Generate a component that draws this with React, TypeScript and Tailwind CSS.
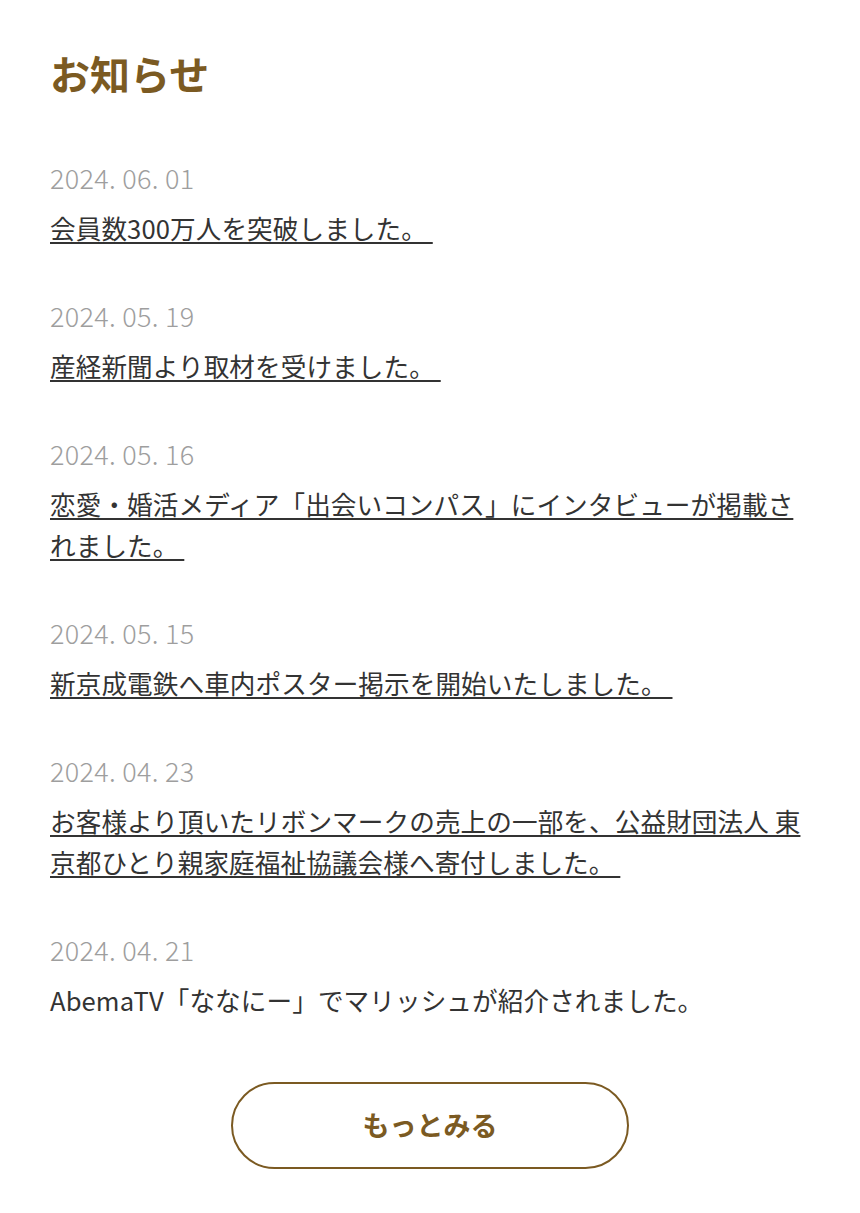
const news = [
  { date: '2024. 06. 01', title: '会員数300万人を突破しました。 ', link: true },
  { date: '2024. 05. 19', title: '産経新聞より取材を受けました。 ', link: true },
  { date: '2024. 05. 16', title: '恋愛・婚活メディア「出会いコンパス」にインタビューが掲載されました。 ', link: true },
  { date: '2024. 05. 15', title: '新京成電鉄へ車内ポスター掲示を開始いたしました。 ', link: true },
  { date: '2024. 04. 23', title: 'お客様より頂いたリボンマークの売上の一部を、公益財団法人 東京都ひとり親家庭福祉協議会様へ寄付しました。 ', link: true },
  { date: '2024. 04. 21', title: 'AbemaTV「ななにー」でマリッシュが紹介されました。', link: false },
];

export default function App() {
  return (
    <div className="min-h-[1213px] bg-white px-[50px] pt-[44px] pb-[44px] font-['Noto_Sans_CJK_JP',sans-serif]">
      <h2 className="text-[40px] font-bold leading-[58px] text-[#7b5a22]">お知らせ</h2>

      <ul className="mt-[58px] flex flex-col gap-[50px]">
        {news.map((n) => (
          <li key={n.date}>
            <p className="text-[27px] font-light leading-[36px] tracking-[0.3px] text-[#9e9e9e]">{n.date}</p>
            <p className="mt-[11px] text-[25.6px] leading-[41px] tracking-[0.1px] text-[#333333]">
              {n.link ? (
                <a href="#" className="underline decoration-[2px] underline-offset-[3px] whitespace-pre-wrap">
                  {n.title}
                </a>
              ) : (
                n.title
              )}
            </p>
          </li>
        ))}
      </ul>

      <div className="mt-[62px] flex justify-center">
        <button className="flex h-[87px] w-[398px] items-center justify-center rounded-full border-2 border-[#7b5a22] text-[27px] font-bold text-[#7b5a22]">
          もっとみる
        </button>
      </div>
    </div>
  );
}
